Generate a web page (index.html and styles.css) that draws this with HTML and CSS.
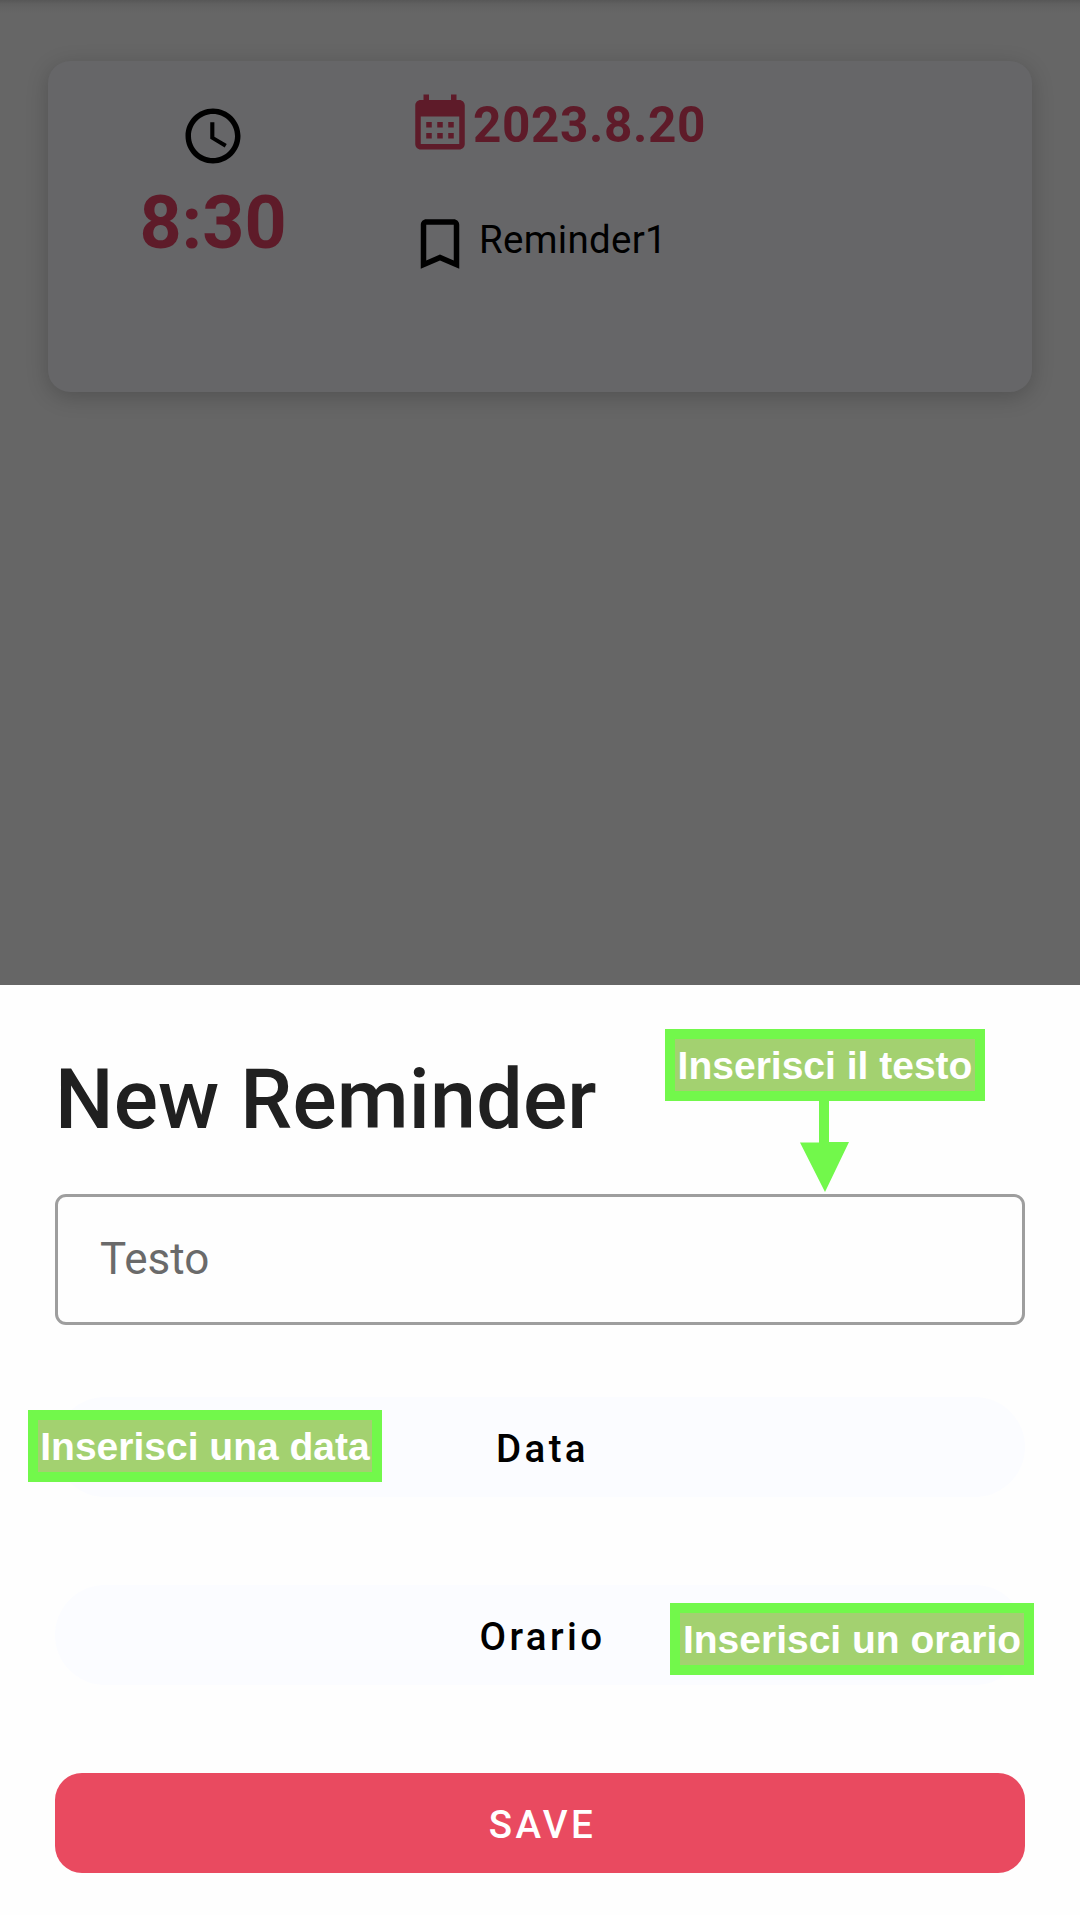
FILE: index.html
```html
<!DOCTYPE html>
<html lang="it">
<head>
<meta charset="utf-8">
<title>New Reminder</title>
<link rel="stylesheet" href="styles.css">
</head>
<body>
<main class="screen">
  <section class="backdrop">
    <article class="card">
      <div class="card-time">
        <svg class="icon" viewBox="0 0 24 24"><path d="M11.99 2C6.47 2 2 6.48 2 12s4.47 10 9.99 10C17.52 22 22 17.52 22 12S17.52 2 11.99 2zM12 20c-4.42 0-8-3.58-8-8s3.58-8 8-8 8 3.58 8 8-3.58 8-8 8zm.5-13H11v6l5.25 3.15.75-1.23-4.5-2.67z"/></svg>
        <span class="time">8:30</span>
      </div>
      <div class="card-info">
        <div class="date-row">
          <svg class="icon icon-red" viewBox="0 0 24 24"><path d="M19 4h-1V2h-2v2H8V2H6v2H5c-1.11 0-1.99.9-1.99 2L3 20c0 1.1.89 2 2 2h14c1.1 0 2-.9 2-2V6c0-1.1-.9-2-2-2zm0 16H5V10h14v10zM9 14H7v-2h2v2zm4 0h-2v-2h2v2zm4 0h-2v-2h2v2zm-8 4H7v-2h2v2zm4 0h-2v-2h2v2zm4 0h-2v-2h2v2z"/></svg>
          <span class="date">2023.8.20</span>
        </div>
        <div class="name-row">
          <svg class="icon" viewBox="0 0 24 24"><path d="M17 3H7c-1.1 0-1.99.9-1.99 2L5 21l7-3 7 3V5c0-1.1-.9-2-2-2zm0 15l-5-2.18L7 18V5h10v13z"/></svg>
          <span class="name">Reminder1</span>
        </div>
      </div>
    </article>
  </section>
  <section class="sheet">
    <h1 class="title">New Reminder</h1>
    <div class="field">Testo</div>
    <div class="actions">
      <div class="button">Data</div>
      <div class="button">Orario</div>
      <div class="button save">SAVE</div>
    </div>
    <div class="note note-text">Inserisci il testo</div>
    <svg class="arrow" viewBox="0 0 50 91"><path d="M19 0H29V41H49L25 91L0 41.5H19Z"/></svg>
    <div class="note note-date">Inserisci una data</div>
    <div class="note note-hour">Inserisci un orario</div>
  </section>
</main>
</body>
</html>
```
FILE: styles.css
```css
* { box-sizing: border-box; }

body {
  margin: 0;
  font-family: Roboto, "Liberation Sans", sans-serif;
}

.screen {
  display: flex;
  flex-direction: column;
  width: 1080px;
  height: 1915px;
  overflow: hidden;
}

.backdrop {
  height: 985px;
  padding: 61px 48px 0;
  background: linear-gradient(#575757 0, #606060 4px, #646464 9px, #666 13px);
}

.card {
  display: flex;
  height: 331px;
  border-radius: 22px;
  background: #666668;
  box-shadow: 0 5px 22px rgba(0, 0, 0, .2);
}

.card-time {
  display: flex;
  flex-direction: column;
  align-items: center;
  width: 330px;
  padding-top: 42px;
}

.icon {
  flex: none;
  width: 66px;
  height: 66px;
}

.icon-red { fill: #5e1b29; }

.time {
  margin-top: 11px;
  font-size: 73.5px;
  font-weight: 700;
  line-height: 86px;
  color: #5e1b29;
}

.card-info {
  display: flex;
  flex-direction: column;
  gap: 56px;
  padding: 28px 0 0 29px;
}

.date-row, .name-row {
  display: flex;
  align-items: center;
}

.date {
  padding-top: 5px;
  font-size: 49.5px;
  font-weight: 700;
  line-height: 58px;
  letter-spacing: .6px;
  color: #5e1b29;
}

.name {
  padding: 0 0 8px 6px;
  font-size: 38.5px;
  line-height: 46px;
  letter-spacing: .3px;
}

.sheet {
  position: relative;
  height: 930px;
  padding: 67px 55px 0;
  background: #fefefe;
}

.title {
  margin: 0;
  font-size: 82.5px;
  font-weight: 500;
  line-height: 96px;
  letter-spacing: .2px;
  color: #202020;
}

.field {
  display: flex;
  align-items: center;
  height: 131px;
  margin-top: 46px;
  padding: 0 0 2px 42px;
  border: 3px solid #9e9e9e;
  border-radius: 11px;
  font-size: 44px;
  color: #6a6a6a;
}

.actions {
  display: flex;
  flex-direction: column;
  gap: 88px;
  margin-top: 72px;
}

.button {
  display: flex;
  align-items: center;
  justify-content: center;
  height: 100px;
  padding: 2px 0 0 5px;
  border-radius: 50px;
  background: #fbfcff;
  font-size: 38.5px;
  font-weight: 500;
  letter-spacing: 3.4px;
  color: #000;
}

.save {
  border-radius: 27px;
  background: #e94a60;
  color: #fff;
}

/* Callouts laid over the form */
.note {
  position: absolute;
  display: flex;
  align-items: center;
  justify-content: center;
  height: 72px;
  padding-top: 2px;
  border: 10px solid #72f84b;
  background: #a3d170;
  font: 700 39px "Liberation Sans", sans-serif;
  white-space: nowrap;
  color: #fff;
}

.note-text { left: 665px; top: 44px; width: 320px; }
.note-date { left: 28px; top: 425px; width: 354px; }
.note-hour { left: 670px; top: 618px; width: 364px; }

.arrow {
  position: absolute;
  left: 800px;
  top: 116px;
  width: 50px;
  height: 91px;
  fill: #72f84b;
}
```
